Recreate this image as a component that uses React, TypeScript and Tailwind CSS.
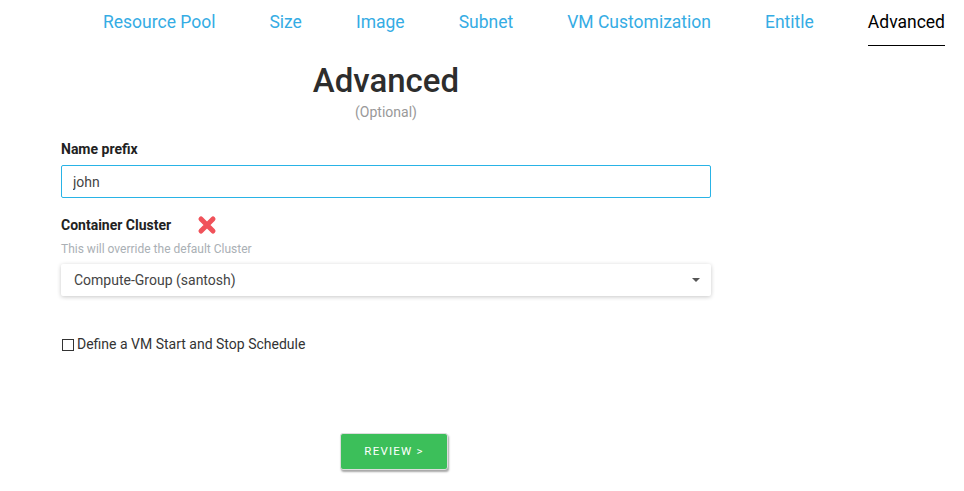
import {useState} from "react";

const TABS = [
  "Resource Pool",
  "Size",
  "Image",
  "Subnet",
  "VM Customization",
  "Entitle",
  "Advanced",
];

export default function App() {
  const [prefix, setPrefix] = useState("john");
  const [schedule, setSchedule] = useState(false);

  return (
    <div className="w-[964px] h-[491px] bg-white font-['Roboto',sans-serif] text-[#333]">
      {/* wizard tabs */}
      <nav className="flex gap-[54px] pl-[103px] pt-[10px]">
        {TABS.map((t) => (
          <div
            key={t}
            className={`pb-[11px] text-[17.5px] leading-[24px] ${
              t === "Advanced"
                ? "text-black border-b-[1.5px] border-black"
                : "text-[#35ace4]"
            }`}
          >
            {t}
          </div>
        ))}
      </nav>

      <div className="w-[650px] ml-[61px]">
        <div className="text-center mt-[15px]">
          <h1 className="text-[33px] leading-[40px] font-medium text-[#2d2d2d]">
            Advanced
          </h1>
          <p className="text-[14px] leading-[17px] text-[#999] mt-[3px]">
            (Optional)
          </p>
        </div>

        <label className="block mt-[20px] text-[14px] leading-[17px] font-bold text-[#222]">
          Name prefix
        </label>
        <input
          value={prefix}
          onChange={(e) => setPrefix(e.target.value)}
          className="block w-full h-[33px] mt-[7px] px-[11px] border border-[#29b3e6] rounded-[2px] text-[14px] text-[#444] outline-none"
        />

        <div className="flex items-center mt-[17px]">
          <span className="text-[14px] leading-[17px] font-bold text-[#222]">
            Container Cluster
          </span>
          <svg width="22" height="22" viewBox="0 0 22 22" className="ml-[25px] -mt-[1px]">
            <path
              d="M5 5 L17 17 M17 5 L5 17"
              stroke="#f0525a"
              strokeWidth="5"
              strokeLinecap="round"
            />
          </svg>
        </div>
        <p className="text-[12px] leading-[15px] text-[#aab0b5] mt-[6px]">
          This will override the default Cluster
        </p>

        <div className="relative mt-[7px] h-[32px] bg-white rounded-[2px] shadow-[0_1px_4px_rgba(0,0,0,0.22)] flex items-center px-[13px] text-[14px] text-[#444]">
          Compute-Group (santosh)
          <span className="absolute right-[11px] top-[14px] w-0 h-0 border-l-[4px] border-r-[4px] border-t-[4px] border-l-transparent border-r-transparent border-t-[#555]" />
        </div>

        <label className="flex items-center gap-[3px] mt-[38px] text-[14px] text-[#333] cursor-pointer">
          <input
            type="checkbox"
            checked={schedule}
            onChange={(e) => setSchedule(e.target.checked)}
            className="appearance-none w-[12px] h-[12px] ml-[1px] border border-[#333] bg-white checked:bg-[#35ace4]"
          />
          Define a VM Start and Stop Schedule
        </label>

        <div className="flex mt-[78px] pl-[279px]">
          <button className="w-[108px] h-[37px] bg-[#3cbf5a] text-white text-[11.5px] tracking-[1.2px] rounded-[3px] border border-[#ddd] shadow-[1px_2px_2px_rgba(0,0,0,0.35)]">
            REVIEW &gt;
          </button>
        </div>
      </div>
    </div>
  );
}
